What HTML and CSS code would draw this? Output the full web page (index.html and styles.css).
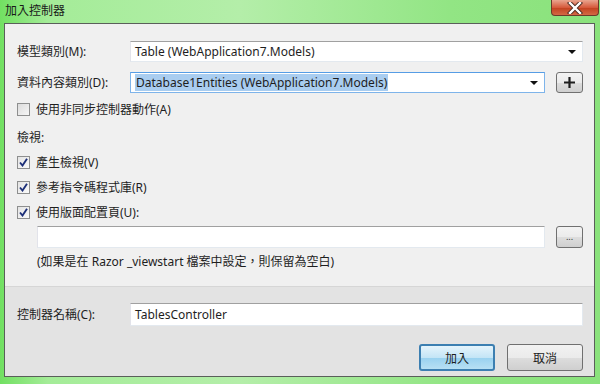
FILE: index.html
```html
<!DOCTYPE html>
<html>
  <head>
    <meta charset="utf-8" />
    <title>加入控制器</title>
    <link rel="stylesheet" href="styles.css">
  </head>
  <body>
    <div class="window">
      <div class="titlebar">
        <div class="title">加入控制器</div>
        <div class="close">
          <svg width="20" height="12" viewBox="0 0 20 12">
            <path d="M5 1 L15 11 M15 1 L5 11" stroke="#4a2a20" stroke-width="4.2" stroke-linecap="square" />
            <path d="M5 1 L15 11 M15 1 L5 11" stroke="#ffffff" stroke-width="2.4" stroke-linecap="square" />
          </svg>
        </div>
      </div>

      <div class="panel">
        <div class="top">
          <div class="row">
            <div class="label">模型類別(M):</div>
            <div class="select">
              <span>Table (WebApplication7.Models)</span>
              <div class="arrow"></div>
            </div>
          </div>
          <div class="row row2">
            <div class="label">資料內容類別(D):</div>
            <div class="select focus">
              <span class="sel">Database1Entities (WebApplication7.Models)</span>
              <div class="arrow"></div>
            </div>
            <div class="smallbtn plus">
              <svg width="11" height="11" viewBox="0 0 11 11">
                <path d="M5.5 0 V11 M0 5.5 H11" stroke="#1e1e1e" stroke-width="2.2" />
              </svg>
            </div>
          </div>

          <div class="check first"><span class="box"></span>使用非同步控制器動作(A)</div>
          <div class="heading">檢視:</div>
          <div class="check c1"><span class="box on"><svg width="9" height="9" viewBox="0 0 9 9"><path d="M1 4.5 L3.5 7.5 L8 0.8" fill="none" stroke="#1c2f78" stroke-width="1.9" /></svg></span>產生檢視(V)</div>
          <div class="check"><span class="box on"><svg width="9" height="9" viewBox="0 0 9 9"><path d="M1 4.5 L3.5 7.5 L8 0.8" fill="none" stroke="#1c2f78" stroke-width="1.9" /></svg></span>參考指令碼程式庫(R)</div>
          <div class="check"><span class="box on"><svg width="9" height="9" viewBox="0 0 9 9"><path d="M1 4.5 L3.5 7.5 L8 0.8" fill="none" stroke="#1c2f78" stroke-width="1.9" /></svg></span>使用版面配置頁(U):</div>

          <div class="layout">
            <div class="input wide"></div>
            <div class="smallbtn dots">...</div>
          </div>
          <div class="note">(如果是在 Razor _viewstart 檔案中設定，則保留為空白)</div>
        </div>

        <div class="bottom">
          <div class="row">
            <div class="label">控制器名稱(C):</div>
            <div class="input name">TablesController</div>
          </div>
          <div class="buttons">
            <div class="btn primary">加入</div>
            <div class="btn">取消</div>
          </div>
        </div>
      </div>
    </div>
  </body>
</html>
```

FILE: styles.css
```css
* {
  margin: 0;
  padding: 0;
  box-sizing: border-box;
}
body {
  width: 600px;
  height: 384px;
  overflow: hidden;
  font-family: "Noto Sans", "Noto Sans CJK TC", sans-serif;
  font-size: 12px;
  color: #1e1e1e;
}
.window {
  width: 600px;
  height: 384px;
  background: linear-gradient(90deg, #72e062 0%, #a4ec98 8%, #b4eea9 40%, #92e584 75%, #8ae27c 100%);
  padding: 0 5px 7px 4px;
  display: flex;
  flex-direction: column;
}

/* title bar */
.titlebar {
  height: 23px;
  display: flex;
  justify-content: space-between;
  align-items: flex-start;
}
.title {
  padding: 3px 0 0 1px;
  font-size: 12px;
  line-height: 16px;
  color: #1a1a1a;
}
.close {
  width: 48px;
  height: 16px;
  margin-right: -4px;
  border: 1px solid #6b3a2a;
  border-top: none;
  border-radius: 0 0 4px 4px;
  background: linear-gradient(#e9a58f, #d65a3c 50%, #c2401f 51%, #d36a44);
  display: flex;
  justify-content: center;
  align-items: center;
}

/* main panel */
.panel {
  flex: 1;
  border: 1px solid #5a5f5a;
  display: flex;
  flex-direction: column;
}
.top {
  background: #f0f0f0;
  padding: 17px 11px 14px 12px;
}
.bottom {
  flex: 1;
  background: #e3e3e3;
  border-top: 1px solid #d6d6d6;
  padding: 16px 11px 0 12px;
}
.row {
  display: flex;
  align-items: center;
}
.row2 {
  margin-top: 10px;
}
.label {
  width: 113px;
  line-height: 21px;
}

/* fields */
.select, .input {
  height: 21px;
  background: #fff;
  border: 1px solid #abadb3;
  border-top-color: #a0a0a0;
  border-left-color: #e2e3ea;
  border-right-color: #e3e9ef;
  border-bottom-color: #e3e9ef;
  display: flex;
  align-items: center;
  padding-left: 4px;
}
.select {
  flex: 1;
  justify-content: space-between;
  padding-right: 6px;
}
.select.focus {
  border-color: #7eb4ea;
  border-top-color: #569de5;
}
.sel {
  background: #a9cdf0;
  padding: 0 1px;
  line-height: 17px;
}
.arrow {
  width: 0;
  height: 0;
  border-left: 4px solid transparent;
  border-right: 4px solid transparent;
  border-top: 4px solid #111;
}
.smallbtn {
  width: 27px;
  height: 21px;
  margin-left: 11px;
  border: 1px solid #707070;
  border-radius: 3px;
  background: linear-gradient(#f3f3f3, #ebebeb 50%, #dddddd 51%, #cfcfcf);
  display: flex;
  justify-content: center;
  align-items: center;
}
.dots {
  height: 22px;
  font-size: 9px;
  line-height: 9px;
  padding-bottom: 2px;
  color: #333;
}

/* checkboxes */
.check, .heading {
  height: 20px;
  display: flex;
  align-items: center;
}
.check.first {
  margin-top: 6px;
}
.heading {
  margin-top: 8px;
}
.check {
  margin-top: 5px;
}
.check.c1 {
  margin-top: 5px;
}
.box {
  width: 13px;
  height: 13px;
  margin-right: 6px;
  border: 1px solid #8e8f8f;
  background: linear-gradient(135deg, #dcdcdc, #f6f6f6);
  display: flex;
  justify-content: center;
  align-items: center;
}
.box.on {
  background: linear-gradient(135deg, #e4e4e4, #fafafa);
}

.layout {
  display: flex;
  margin-top: 4px;
  padding-left: 20px;
}
.input.wide {
  flex: 1;
  height: 22px;
}
.note {
  margin-top: 4px;
  padding-left: 20px;
  line-height: 20px;
}

.input.name {
  flex: 1;
  height: 23px;
}

/* buttons */
.buttons {
  display: flex;
  justify-content: flex-end;
  gap: 12px;
  margin-top: 18px;
}
.btn {
  width: 76px;
  height: 27px;
  border: 1px solid #707070;
  border-radius: 3px;
  background: linear-gradient(#f2f2f2, #ebebeb 50%, #dddddd 51%, #cfcfcf);
  display: flex;
  justify-content: center;
  align-items: center;
}
.btn.primary {
  border: 2px solid #3c7fb1;
  background: linear-gradient(#e5f4fc, #c4e5f6 50%, #98d1ef 51%, #b7e0f4);
}
```
